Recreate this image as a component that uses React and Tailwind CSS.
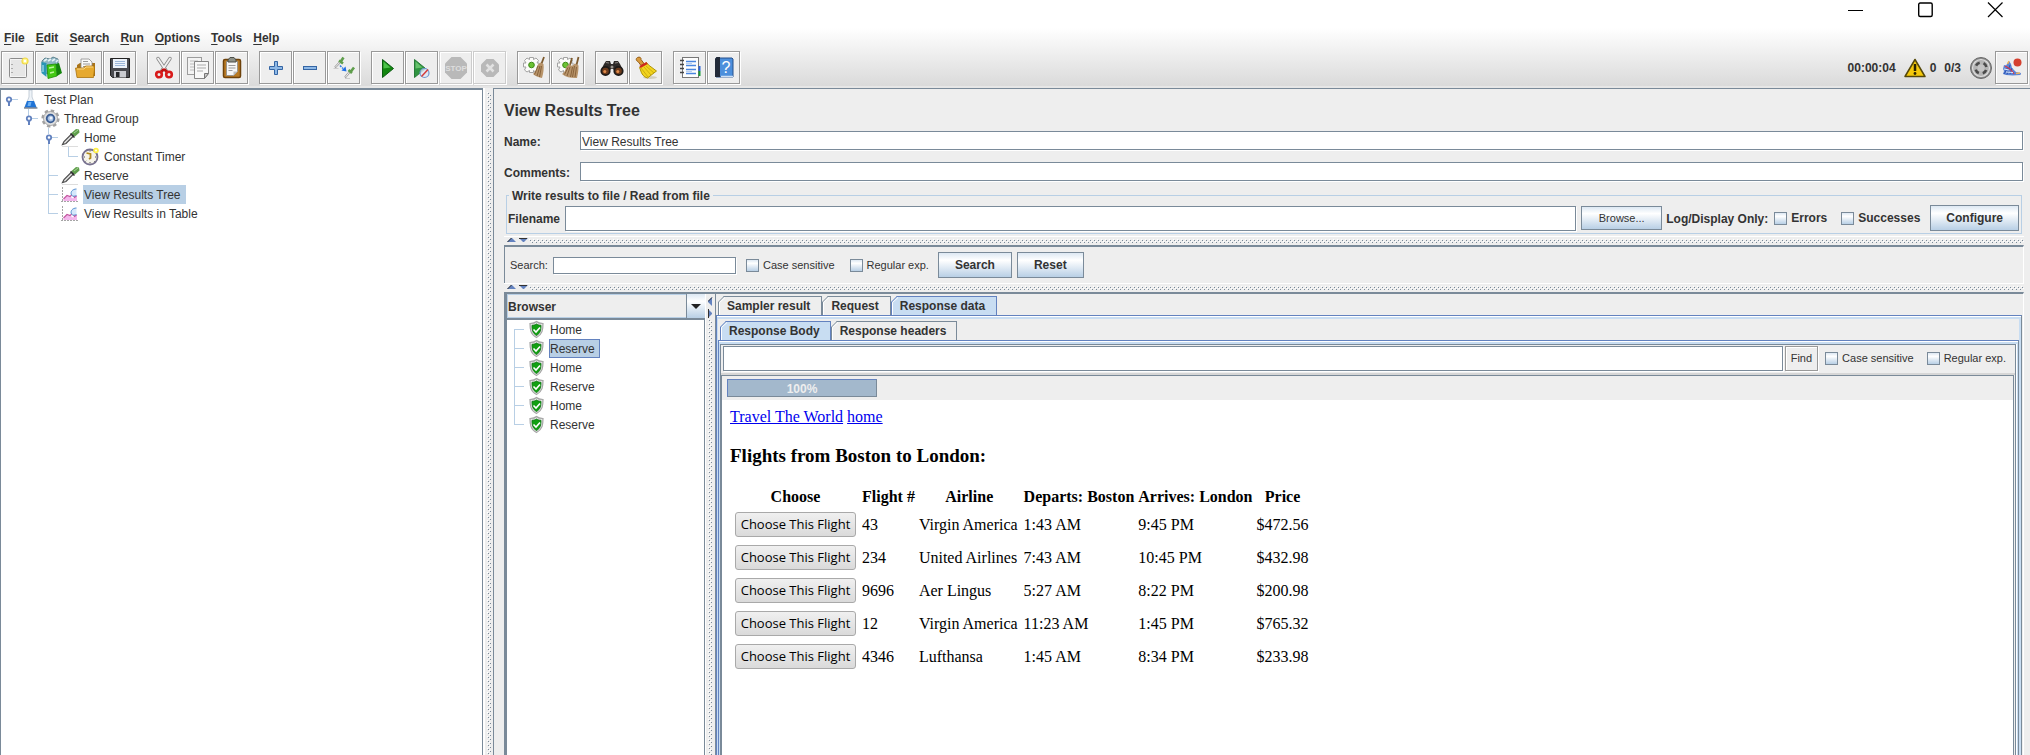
import { useState } from "react";

const menus = ["File", "Edit", "Search", "Run", "Options", "Tools", "Help"];

const flights = [
  { number: "43", airline: "Virgin America", departs: "1:43 AM", arrives: "9:45 PM", price: "$472.56" },
  { number: "234", airline: "United Airlines", departs: "7:43 AM", arrives: "10:45 PM", price: "$432.98" },
  { number: "9696", airline: "Aer Lingus", departs: "5:27 AM", arrives: "8:22 PM", price: "$200.98" },
  { number: "12", airline: "Virgin America", departs: "11:23 AM", arrives: "1:45 PM", price: "$765.32" },
  { number: "4346", airline: "Lufthansa", departs: "1:45 AM", arrives: "8:34 PM", price: "$233.98" },
];

/* ---------- Toolbar icons ---------- */

const NewIcon = () => (
  <svg width="24" height="24" viewBox="0 0 24 24">
    <rect x="3.5" y="2.5" width="17" height="19" rx="1" fill="#f4f4f4" stroke="#8c8c8c" />
    <rect x="5" y="4" width="14" height="16" fill="#e6e6e6" />
    <path d="M6 8v1M6 12v1M6 16v1" stroke="#999" strokeWidth="1.5" />
    <circle cx="19" cy="5" r="3" fill="#fff68a" stroke="#f0d94a" strokeWidth="1.2" />
    <circle cx="19" cy="5" r="1.2" fill="#fff" />
  </svg>
);

const TemplatesIcon = () => (
  <svg width="24" height="24" viewBox="0 0 24 24">
    <path d="M2 5l3-3 5 1 3-2 5 2v10l-8 6-8-4z" fill="#8fb6c4" stroke="#46707e" strokeWidth=".8" />
    <path d="M4 5l3-2M8 5l3-2M12 5l3-2M16 6l2-2" stroke="#e4f1f5" strokeWidth="1.6" />
    <path d="M1.500 6l5 1v14l-5-4z" fill="#2a96b5" />
    <path d="M3 9v7" stroke="#c3ecf7" />
    <path d="M7 9l9-1 1 12-9 2.500z" fill="#43c914" stroke="#1c8a06" strokeWidth=".8" />
    <path d="M16 8l3-1 3 10-5 3z" fill="#14850c" />
    <path d="M9 12l5-1M10 17l4-1" stroke="#baf79c" strokeWidth="1.400" />
  </svg>
);

const OpenIcon = () => (
  <svg width="24" height="24" viewBox="0 0 24 24">
    <path d="M3 9l3-2h15v13H3z" fill="#a9741a" />
    <path d="M7 3h8l3 3v10H7z" fill="#fafafa" stroke="#8d8d8d" strokeWidth=".8" />
    <path d="M9 5.500h5M9 8h7M9 10.500h7" stroke="#9a9a9a" />
    <path d="M1.500 12h8l2-2h9v3l-1 8.500H3z" fill="#e6a92f" stroke="#a8720f" strokeWidth=".8" />
    <path d="M3 13h7l2-2h7" stroke="#f8d789" fill="none" />
  </svg>
);

const SaveIcon = () => (
  <svg width="24" height="24" viewBox="0 0 24 24">
    <path d="M2.500 2.500h19v19h-17l-2-2z" fill="#4a4b50" stroke="#222" />
    <rect x="5" y="3" width="14" height="9" fill="#eef3fa" />
    <path d="M7 5.500h10M7 7.500h10M7 9.500h10" stroke="#9db7d8" />
    <rect x="6" y="15" width="12" height="6.500" fill="#c9cbd0" />
    <rect x="8" y="16" width="3.500" height="5" fill="#26272a" />
  </svg>
);

const CutIcon = () => (
  <svg width="24" height="24" viewBox="0 0 24 24" fill="none">
    <path d="M6 2.500l8 12M18 2.500L10 14.500" stroke="#888" strokeWidth="3.400" strokeLinecap="round" />
    <path d="M6 2.500l8 12M18 2.500L10 14.500" stroke="#f1f1f1" strokeWidth="1.800" strokeLinecap="round" />
    <path d="M12 13l-3 3M12 13l3 3" stroke="#c01010" strokeWidth="2.500" />
    <circle cx="7" cy="18.500" r="2.800" stroke="#d81a1a" strokeWidth="2.600" />
    <circle cx="17" cy="18.500" r="2.800" stroke="#d81a1a" strokeWidth="2.600" />
  </svg>
);

const CopyIcon = () => (
  <svg width="24" height="24" viewBox="0 0 24 24">
    <rect x="1.500" y="1.500" width="14" height="17" fill="#f3f3f3" stroke="#9c9c9c" />
    <path d="M4 5h8M4 8h4M4 11h4M4 14h4" stroke="#bbb" />
    <path d="M8.500 5.500h14v12l-4 5h-10z" fill="#f8f8f8" stroke="#858585" />
    <path d="M22.500 17.500h-4v5z" fill="#c9c9c9" stroke="#777" />
    <path d="M11 9h9M11 12h9M11 15h6" stroke="#aaa" />
  </svg>
);

const PasteIcon = () => (
  <svg width="24" height="24" viewBox="0 0 24 24">
    <rect x="3.500" y="3.500" width="17" height="18" rx="1.500" fill="#b87a24" stroke="#6e420b" strokeWidth="1.500" />
    <path d="M6.500 5.500h11v10l-4 4h-7z" fill="#f7f7f7" stroke="#8b8b8b" strokeWidth=".8" />
    <path d="M8.500 9.500h7M8.500 12h7M8.500 14.500h4" stroke="#9a9a9a" />
    <path d="M17.500 15.500h-4v4z" fill="#bcbcbc" />
    <path d="M8 6V4l2-2.500h4L16 4v2z" fill="#8c9088" stroke="#4c4f49" />
  </svg>
);

const PlusIcon = () => (
  <svg width="24" height="24" viewBox="0 0 24 24">
    <path d="M10.500 5.500h3v5h5v3h-5v5h-3v-5h-5v-3h5z" fill="#8db8e6" stroke="#3465a4" />
  </svg>
);

const MinusIcon = () => (
  <svg width="24" height="24" viewBox="0 0 24 24">
    <rect x="5.500" y="10.500" width="13" height="3" fill="#8db8e6" stroke="#3465a4" />
  </svg>
);

const ToggleIcon = () => (
  <svg width="24" height="24" viewBox="0 0 24 24" fill="none">
    <path d="M3 11.500L9 5" stroke="#9c9c9c" strokeWidth="2" />
    <path d="M3.500 11L8 6" stroke="#eee" />
    <path d="M7 4.500l4 3M8.500 6l3-4.500" stroke="#5f9e4c" strokeWidth="2.600" />
    <path d="M13 21.500l5-6" stroke="#9c9c9c" strokeWidth="2" />
    <path d="M13.500 21l4-5" stroke="#eee" />
    <path d="M16.500 14l3.500 3M18.500 16l3.500-4.500" stroke="#5f9e4c" strokeWidth="2.600" />
    <path d="M1.500 12.500h5M13 22.500h5" stroke="#ccc" />
    <path d="M8 9.500l3 3" stroke="#2f7be8" strokeWidth="1.500" strokeDasharray="2 1" />
    <path d="M14.500 15.500l-5-1 4-4z" fill="#1f6fe6" />
  </svg>
);

const StartIcon = () => (
  <svg width="24" height="24" viewBox="0 0 24 24">
    <path d="M6.500 3.500l11 9-11 9z" fill="#12860f" stroke="#0b5b12" />
    <path d="M7.500 5.500l7 6-7 1z" fill="#4cc24a" />
  </svg>
);

const StartNoPausesIcon = () => (
  <svg width="24" height="24" viewBox="0 0 24 24">
    <path d="M4.500 3.500l11 9-11 9z" fill="#2f9440" stroke="#287a38" />
    <path d="M5.500 5.500l7 6-7 1z" fill="#66c26c" />
    <circle cx="14.500" cy="17" r="4.500" fill="#dce6f5" fillOpacity=".8" stroke="#6e97cf" strokeWidth="1.200" />
    <path d="M11.500 20.500l6.500-7" stroke="#d43b3b" strokeWidth="1.500" />
  </svg>
);

const StopIcon = () => (
  <svg width="24" height="24" viewBox="0 0 24 24">
    <path d="M7.500 1h9L23 7.500v9L16.500 23h-9L1 16.500v-9z" fill="#b9b9b9" />
    <text x="12" y="15" textAnchor="middle" fontSize="8" fontWeight="bold" fill="#dedede" fontFamily="Liberation Sans, sans-serif">STOP</text>
  </svg>
);

const ShutdownIcon = () => (
  <svg width="24" height="24" viewBox="0 0 24 24">
    <path d="M8.500 3h7L21 8.500v7L15.500 21h-7L3 15.500v-7z" fill="#b9b9b9" />
    <path d="M8.500 8.500l7 7M15.500 8.500l-7 7" stroke="#e2e2e2" strokeWidth="2.500" />
  </svg>
);

const Gear = () => (
  <g>
    <path
      d="M7.500 1.500h4v2l2.500-1.500 2.500 2.500-1.500 2.500h2v4h-2l1 3-2.500 2-2-1.500v2h-4v-2L5 16l-2.500-2L4 11H1.500V7H4L2.500 4.500 5 2l2.500 1.500z"
      fill="#fbfbf9"
      stroke="#a3a3a3"
    />
    <circle cx="9.500" cy="9" r="2.800" fill="#6bc233" stroke="#3d8b16" />
  </g>
);

const ClearIcon = () => (
  <svg width="24" height="24" viewBox="0 0 24 24">
    <Gear />
    <path d="M19 9l3-8" stroke="#7d5a2e" strokeWidth="1.800" />
    <path d="M15.500 9l3-2.500 3 1.500c.500 4 0 9-1.500 14-3-.300-6-1.500-9-4 2-1.500 3.500-5 4.500-9z" fill="#b8946a" />
    <path d="M16 10l-3.500 8.500M18 10l-3 10M19.500 10l-2 11" stroke="#7c5730" strokeWidth=".8" />
  </svg>
);

const ClearAllIcon = () => (
  <svg width="24" height="24" viewBox="0 0 24 24">
    <Gear />
    <path d="M14 9l2-7M20.500 9l2-8" stroke="#7d5a2e" strokeWidth="1.800" />
    <path d="M10.500 10.500l3-2.500 2.500 2 3-2.500 3.500 2c0 5-.500 8-1.500 12.500-5 .300-11-.500-15-4 2.500-1.500 3.500-4 4.500-7.500z" fill="#b8946a" />
    <path d="M12 11.500l-3.500 7M14 11l-3 9M16.500 11l-2 10M18.500 10l-2 11M20.500 11l-1.500 10" stroke="#7c5730" strokeWidth=".8" />
  </svg>
);

const BinocularsIcon = () => (
  <svg width="24" height="24" viewBox="0 0 24 24">
    <path d="M4 8l2-3h4l1 3h2l1-3h4l2 3 3 6-6 4-4-5h-2l-4 5-6-4z" fill="#2e2a28" />
    <path d="M6 6.500l3 .5M18 6.500l-3 .5" stroke="#8b8580" strokeWidth="1.200" />
    <circle cx="5.500" cy="15" r="4.200" fill="#6d3b1c" stroke="#1d1a18" strokeWidth="1.800" />
    <circle cx="18.500" cy="15" r="4.200" fill="#6d3b1c" stroke="#1d1a18" strokeWidth="1.800" />
    <circle cx="4.800" cy="15.500" r="1.500" fill="#e08b4a" />
    <circle cx="17.800" cy="15.500" r="1.500" fill="#e08b4a" />
    <circle cx="12" cy="11" r="1.500" fill="#9a948e" />
  </svg>
);

const BroomIcon = () => (
  <svg width="24" height="24" viewBox="0 0 24 24">
    <ellipse cx="16" cy="21.500" rx="7" ry="1.500" fill="#d3cfc0" />
    <path d="M3.500 1.500c2-1 4 0 3.500 2l3 4-3 2-3-4c-2-.5-2.500-3-.5-4z" fill="#d99a3c" stroke="#97601a" />
    <path d="M5.500 11.500l7-5 2 2.500 8 6-9 7c-4-1-6-4-7-8z" fill="#f2d41e" stroke="#b0950a" />
    <path d="M7 12l7 9M10 11l7 8M12 10l8 7" stroke="#c3a50c" strokeWidth=".8" />
    <path d="M6 11l7-4" stroke="#cf2a1e" strokeWidth="2.500" />
  </svg>
);

const FunctionHelperIcon = () => (
  <svg width="24" height="24" viewBox="0 0 24 24">
    <rect x="4.500" y="1.500" width="16" height="20" fill="#fdfdfd" stroke="#777" />
    <path d="M8 5.500h10M8 9.500h10M8 13.500h10M8 17.500h10" stroke="#4a86e0" strokeWidth="1.500" />
    <path d="M8 7.500h6M8 15.500h6" stroke="#b5cdf0" />
    <path d="M2 4.500h4M2 8.500h4M2 12.500h4M2 16.500h4" stroke="#444" strokeWidth="1.500" />
    <path d="M21.500 10v5" stroke="#2e66d8" strokeWidth="2" />
    <path d="M21.500 15v5" stroke="#199a3b" strokeWidth="2" />
  </svg>
);

const HelpIcon = () => (
  <svg width="24" height="24" viewBox="0 0 24 24">
    <path d="M4 2h16l1 1v18H4z" fill="#4c8fdc" stroke="#27518c" />
    <path d="M3 3l1.500-2H8v20H3z" fill="#222a38" />
    <path d="M9 20.500h12" stroke="#cfe0f4" strokeWidth="1.500" />
    <text x="14" y="17" textAnchor="middle" fontSize="16" fill="#fff" fontFamily="Liberation Sans, sans-serif">?</text>
  </svg>
);

const WarningIcon = () => (
  <svg width="22" height="20" viewBox="0 0 22 20">
    <path d="M11 1.500L21 18.500H1z" fill="#f5c90b" stroke="#55480a" strokeWidth="1.500" strokeLinejoin="round" />
    <path d="M11 6v7" stroke="#2c2500" strokeWidth="2.500" />
    <circle cx="11" cy="15.500" r="1.400" fill="#2c2500" />
  </svg>
);

const RemoteIcon = () => (
  <svg width="24" height="24" viewBox="0 0 24 24" fill="none">
    <circle cx="12" cy="12" r="10.500" fill="#8d8d8d" stroke="#6a6a6a" />
    <circle cx="12" cy="12" r="8.500" fill="#b4b4b4" stroke="#dedede" strokeWidth="1.200" />
    <circle cx="12" cy="12" r="5.500" stroke="#4a4a4a" strokeWidth="2.600" strokeDasharray="4.600 4.040" strokeDashoffset="-2" />
    <circle cx="12" cy="12" r="3.500" fill="#c4c4c4" />
  </svg>
);

const FeatherIcon = () => (
  <svg width="24" height="24" viewBox="0 0 24 24">
    <path d="M4 9l2 .500L9 5l2 3 1 4 4 4 5 1-.500 2-8 .500L6 19l-3-1 1-3-1-2z" fill="#5c84d6" />
    <path d="M4 18l4-7M7 18.500L10 9M10 18l2-6" stroke="#2c54b0" />
    <path d="M5 10c4 2 7 4 9 8" stroke="#d63a4a" strokeWidth="1.200" fill="none" />
    <path d="M9 5l-1.500 3M20 17l-4 .5" stroke="#f0b45a" strokeWidth="1.500" />
    <path d="M4 13l5 1M6 16l7 .5" stroke="#dfe9fb" />
    <circle cx="17.500" cy="6.500" r="4" fill="#d5402f" />
  </svg>
);

const toolGroups = [
  [["New", NewIcon], ["Templates", TemplatesIcon], ["Open", OpenIcon], ["Save", SaveIcon]],
  [["Cut", CutIcon], ["Copy", CopyIcon], ["Paste", PasteIcon]],
  [["Expand All", PlusIcon], ["Collapse All", MinusIcon], ["Toggle", ToggleIcon]],
  [["Start", StartIcon], ["Start no pauses", StartNoPausesIcon], ["Stop", StopIcon, true], ["Shutdown", ShutdownIcon, true]],
  [["Clear", ClearIcon], ["Clear All", ClearAllIcon]],
  [["Search", BinocularsIcon], ["Reset Search", BroomIcon]],
  [["Function Helper", FunctionHelperIcon], ["Help", HelpIcon]],
];

/* ---------- Tree icons, all in a 20x19 box ---------- */

const FlaskIcon = () => (
  <svg width="20" height="19" viewBox="0 0 20 19">
    <path d="M8 0h3M8 0v7L3.500 18h12L11 7V0" fill="#eef3f8" stroke="#b9c4cf" strokeWidth=".8" />
    <path d="M6 11h7l2.500 6.500h-12z" fill="#1f73d6" />
    <path d="M7.500 12h3l-1 4h-3z" fill="#6cb0f2" />
    <path d="M3 18h13.500" stroke="#56616e" />
  </svg>
);

const GearIcon = () => (
  <svg width="20" height="19" viewBox="0 0 20 19">
    <circle cx="9.500" cy="9.500" r="7.800" fill="none" stroke="#a2a2a2" strokeWidth="2.600" strokeDasharray="3.400 2.720" />
    <circle cx="9.500" cy="9.500" r="7" fill="#dedede" stroke="#999" strokeWidth=".8" />
    <circle cx="9.500" cy="9.500" r="3.800" fill="#a9c1e2" stroke="#3b5e94" strokeWidth="1.800" />
    <circle cx="10" cy="9" r="1.500" fill="#eef4fb" />
  </svg>
);

const DropperIcon = () => (
  <svg width="20" height="19" viewBox="0 0 20 19">
    <path d="M1 18.500h16" stroke="#ddd" />
    <path d="M1.500 16.500l1.500-3 8-8 2 2-8 8z" fill="#e2e2e2" stroke="#4c4c4c" strokeWidth="1.200" />
    <path d="M9.500 5.500l4 4" stroke="#2f2f2f" strokeWidth="1.600" />
    <path d="M10.500 5l4.500-4 3 .5.500 3L14 8.500z" fill="#5f9e4c" />
    <path d="M13 5l4-3" stroke="#a6d394" />
  </svg>
);

const TimerIcon = () => (
  <svg width="20" height="19" viewBox="0 0 20 19">
    <circle cx="9" cy="10" r="7.500" fill="#f6f4ea" stroke="#77718f" strokeWidth="1.800" />
    <path d="M5.500 6l4 1v4l-1.500 1" stroke="#b08a1e" strokeWidth="1.800" fill="none" />
    <path d="M9 3.500v1M9 15v1M3 10h1M14 10h1M13 14l.7.700M4.500 14.500l.7-.7" stroke="#555" />
    <circle cx="15" cy="3.500" r="2.800" fill="#fff04a" />
    <circle cx="15" cy="3.500" r="1" fill="#fff" />
  </svg>
);

const ChartIcon = () => (
  <svg width="20" height="19" viewBox="0 0 20 19">
    <path d="M1.500 2v15M0 16.500h17" stroke="#a5a5a5" strokeDasharray="2 1" />
    <path d="M2.500 14.500l3.500-3.500 3 .500 3 2 4-3v5.500H2.500z" fill="#f3b6ec" />
    <path d="M2.500 14l3.500-3.500 3 1 2.500-2 2 3 2-1.500" stroke="#c4549f" strokeWidth="1.200" fill="none" />
    <path d="M15.500 4c-4 0-6.500 3-5 6 1 1.500 3 1.500 5 .500" fill="#d6e8fb" stroke="#5a92d2" />
  </svg>
);

const ShieldIcon = () => (
  <svg width="20" height="19" viewBox="0 0 20 19">
    <path d="M9.500 1.500C11 3 13.500 3.500 16 3.500c0 6-.5 11-6.500 14C3.500 14.500 3 9.500 3 3.500c2.500 0 5-.5 6.500-2z" fill="#e6e6e6" stroke="#a5a5a5" strokeWidth="1.200" />
    <path d="M9.500 4C11 5 12.500 5.300 14 5.300c0 4.500-.5 8-4.500 10.200C5.500 13.300 5 9.800 5 5.300 6.500 5.300 8 5 9.500 4z" fill="#12a012" stroke="#0a7010" strokeWidth=".8" />
    <path d="M6.500 9.500l2.500 2.500 4-4.500" stroke="#fff" strokeWidth="1.600" fill="none" />
  </svg>
);

/* One 20px step of indentation: the connector lines and the expand handle */
const Guide = ({ kind }) => (
  <svg width="20" height="19" viewBox="0 0 20 19" className="shrink-0" shapeRendering="crispEdges">
    {(kind === "pipe" || kind === "tee") && <path d="M7.500 0v19" stroke="#b8cfe5" />}
    {(kind === "elbow" || kind === "knob") && <path d="M7.500 0v10" stroke="#b8cfe5" />}
    {(kind === "first" || kind === "knobDown") && <path d="M7.500 9v10" stroke="#b8cfe5" />}
    {kind === "knobDown" && <path d="M7.500 0v6" stroke="#b8cfe5" />}
    {kind !== "blank" && kind !== "pipe" && <path d="M7 9.500h10" stroke="#b8cfe5" />}
    {(kind === "root" || kind === "knob" || kind === "knobDown") && (
      <g shapeRendering="auto">
        <path d="M8 11v5" stroke="#6382bf" strokeWidth="2" />
        <circle cx="8" cy="9.500" r="2.200" fill="#fff" stroke="#6382bf" strokeWidth="1.800" />
      </g>
    )}
  </svg>
);

const TreeRow = ({ guides, icon: Icon, label, selected, framed, onClick }) => {
  let tone = "border-transparent";
  if (selected) tone = framed ? "border-[#6382bf] bg-[#b8cfe5]" : "border-[#b8cfe5] bg-[#b8cfe5]";
  return (
    <li className="flex h-[19px] items-center">
      {guides.map((kind, i) => (
        <Guide key={i} kind={kind} />
      ))}
      <Icon />
      <button
        onClick={onClick}
        className={`ml-[2px] h-[19px] border pt-[2px] pr-1 leading-[15px] whitespace-nowrap ${tone}`}
      >
        {label}
      </button>
    </li>
  );
};

const planRows = [
  { guides: ["root"], icon: FlaskIcon, label: "Test Plan" },
  { guides: ["blank", "knob"], icon: GearIcon, label: "Thread Group" },
  { guides: ["blank", "blank", "knobDown"], icon: DropperIcon, label: "Home" },
  { guides: ["blank", "blank", "pipe", "elbow"], icon: TimerIcon, label: "Constant Timer" },
  { guides: ["blank", "blank", "tee"], icon: DropperIcon, label: "Reserve" },
  { guides: ["blank", "blank", "tee"], icon: ChartIcon, label: "View Results Tree" },
  { guides: ["blank", "blank", "elbow"], icon: ChartIcon, label: "View Results in Table" },
];

const samples = ["Home", "Reserve", "Home", "Reserve", "Home", "Reserve"];

/* ---------- Metal look and feel widgets ---------- */

const Bumps = ({ id, className }) => (
  <svg className={className} shapeRendering="crispEdges">
    <defs>
      <pattern id={id} width="4" height="4" patternUnits="userSpaceOnUse">
        <rect width="1" height="1" fill="#fff" />
        <rect x="1" y="1" width="1" height="1" fill="#7a8a99" />
        <rect x="2" y="2" width="1" height="1" fill="#fff" />
        <rect x="3" y="3" width="1" height="1" fill="#7a8a99" />
      </pattern>
    </defs>
    <rect width="100%" height="100%" fill={`url(#${id})`} />
  </svg>
);

const HorizontalDivider = ({ id }) => (
  <div className="flex h-[9px] items-start border-t border-white pt-px pl-[3px]">
    <svg width="22" height="5" viewBox="0 0 22 5" className="shrink-0">
      <path d="M0 4l4-4h1l4 4z" fill="#6382bf" />
      <path d="M.5 4l4-4" stroke="#333" fill="none" />
      <path d="M12 0h9l-4 4h-1z" fill="#6382bf" />
      <path d="M12 .5h8" stroke="#333" />
    </svg>
    <Bumps id={id} className="mt-px h-1 w-0 flex-1" />
  </div>
);

const MetalButton = ({ children, className }) => (
  <button
    className={`shrink-0 border border-[#7a8a99] bg-linear-to-b from-[#dde8f3] via-white via-30% to-[#b8cfe5] whitespace-nowrap ${className}`}
  >
    {children}
  </button>
);

const Check = ({ label, className }) => (
  <label className={`flex shrink-0 items-center gap-1 whitespace-nowrap ${className}`}>
    <input
      type="checkbox"
      className="size-[13px] appearance-none border border-[#7a8a99] bg-linear-to-b from-[#dde8f3] via-white via-30% to-[#b8cfe5] checked:bg-[#6382bf]"
    />
    {label}
  </label>
);

const Tab = ({ label, selected, onClick, className }) => (
  <button
    role="tab"
    aria-selected={selected}
    onClick={onClick}
    className={`relative h-full border-t border-r pl-[9px] font-bold whitespace-nowrap ${className} ${
      selected ? "border-[#6382bf] bg-[#c8ddf2]" : "border-[#7a8a99] bg-[#eee]"
    }`}
  >
    <svg width="7" height="19" viewBox="0 0 7 19" className="absolute -top-px left-0">
      <path d="M0 0h6L0 6z" fill="#eee" />
      <path d="M.5 19V6L6.500 0" stroke={selected ? "#6382bf" : "#7a8a99"} fill="none" />
      <path d="M1.500 19V6.500L7 1.500" stroke="#fff" fill="none" />
    </svg>
    {label}
  </button>
);

const fieldStyle = "min-w-0 border border-[#7a8a99] bg-white shadow-[1px_1px_0_white] outline-none";

const TitleBar = () => (
  <div className="flex h-7 items-start justify-end bg-white">
    <button aria-label="Minimize" className="flex h-[19px] w-[70px] items-center justify-center">
      <svg width="16" height="16" viewBox="0 0 16 16">
        <path d="M1 8.500h15" stroke="#000" />
      </svg>
    </button>
    <button aria-label="Maximize" className="flex h-[19px] w-[70px] items-center justify-center">
      <svg width="16" height="16" viewBox="0 0 16 16">
        <rect x="1.700" y="1" width="13.500" height="13.500" rx="1.500" fill="none" stroke="#000" strokeWidth="1.400" />
      </svg>
    </button>
    <button aria-label="Close" className="flex h-[19px] w-[70px] items-center justify-center">
      <svg width="16" height="16" viewBox="0 0 16 16">
        <path d="M1 .500l14.500 14.500M15.500.500L1 15" stroke="#000" strokeWidth="1.200" />
      </svg>
    </button>
  </div>
);

const Header = () => (
  <header className="border-b-2 border-[#e6e6e6] bg-linear-to-b from-white to-[#dadada]">
    <nav className="flex h-[22px] gap-[11px] pl-[4px] leading-5 font-bold">
      {menus.map((menu) => (
        <button key={menu} className="pb-[2px]">
          <span className="underline underline-offset-2">{menu[0]}</span>
          {menu.slice(1)}
        </button>
      ))}
    </nav>
    <div className="flex h-9 items-start pt-px pl-px">
      <div className="flex gap-[11px]">
        {toolGroups.map((group, i) => (
          <div key={i} className="flex gap-px">
            {group.map(([name, Icon, disabled]) => (
              <button
                key={name}
                aria-label={name}
                disabled={disabled}
                className="flex size-[33px] items-center justify-center border border-[#999] bg-[#eee] shadow-[1px_1px_0_white,inset_1px_1px_0_white] disabled:border-[#ccc]"
              >
                <Icon />
              </button>
            ))}
          </div>
        ))}
      </div>
      <div className="ml-auto flex items-center pr-[2px] font-bold">
        <span>00:00:04</span>
        <span className="ml-2">
          <WarningIcon />
        </span>
        <span className="ml-1">0</span>
        <span className="ml-2">0/3</span>
        <span className="ml-2">
          <RemoteIcon />
        </span>
        <button
          aria-label="Apache JMeter"
          className="ml-[2px] flex size-[33px] items-center justify-center border border-[#999] bg-[#eee] shadow-[1px_1px_0_white,inset_1px_1px_0_white]"
        >
          <FeatherIcon />
        </button>
      </div>
    </div>
  </header>
);

const FlightsPage = () => (
  <div className="flex-1 bg-white pt-2 pl-2 font-['Liberation_Serif',serif] text-base leading-[18px] text-black">
    <p>
      <a href="#travel" className="text-[#0000ee] underline">Travel The World</a>{" "}
      <a href="#home" className="text-[#0000ee] underline">home</a>
    </p>
    <h3 className="mt-[19px] text-[19px] leading-[22px] font-bold">Flights from Boston to London:</h3>
    <table className="mt-[18px] border-separate border-spacing-[2px]">
      <thead>
        <tr>
          {["Choose", "Flight #", "Airline", "Departs: Boston", "Arrives: London", "Price"].map((head) => (
            <th key={head} className="p-px text-center font-bold whitespace-nowrap">{head}</th>
          ))}
        </tr>
      </thead>
      <tbody>
        {flights.map((flight) => (
          <tr key={flight.number}>
            <td className="p-px">
              <button className="m-[2px] block h-[25px] w-[121px] rounded-[3px] border border-[#a9a9a9] bg-linear-to-b from-[#f0f0f0] to-[#dadada] font-['Open_Sans',sans-serif] text-[13px] leading-[21px] whitespace-nowrap">
                Choose This Flight
              </button>
            </td>
            <td className="p-px">{flight.number}</td>
            <td className="py-px pr-[3px] pl-px whitespace-nowrap">{flight.airline}</td>
            <td className="p-px">{flight.departs}</td>
            <td className="p-px">{flight.arrives}</td>
            <td className="p-px">{flight.price}</td>
          </tr>
        ))}
      </tbody>
    </table>
  </div>
);

const ResponsePane = () => {
  const [tab, setTab] = useState("Response data");
  const [bodyTab, setBodyTab] = useState("Response Body");

  return (
    <section className="mr-px flex min-w-0 flex-1 flex-col border-l border-[#7a8a99]">
      <div role="tablist" className="flex h-[21px] pt-[2px] pl-[2px]">
        {["Sampler result", "Request", "Response data"].map((name) => (
          <Tab key={name} label={name} selected={tab === name} onClick={() => setTab(name)} className="pr-[11px]" />
        ))}
      </div>
      <div className="flex flex-1 flex-col border-t border-r border-l border-t-[#6382bf] border-r-[#7a8a99] border-l-[#6382bf]">
        <div className="flex flex-1 flex-col border-t border-white bg-[#c8ddf2] pt-[2px] pr-[2px] pl-px">
          <div role="tablist" className="flex h-[21px] bg-[#eee] pt-[2px] pl-[2px]">
            {["Response Body", "Response headers"].map((name) => (
              <Tab key={name} label={name} selected={bodyTab === name} onClick={() => setBodyTab(name)} className="pr-[10px]" />
            ))}
          </div>
          <div className="flex flex-1 flex-col border-t border-r border-l border-t-[#6382bf] border-r-[#7a8a99] border-l-[#6382bf]">
            <div className="flex flex-1 flex-col border-t border-white pt-[2px] pr-[2px] pl-px">
              {/* Find bar */}
              <div className="flex flex-1 flex-col border border-b-0 border-[#7a8a99] bg-[#eee] shadow-[1px_0_0_white]">
                <div className="flex items-center border-b-2 border-[#d6d6d6] pt-px pr-[9px] pb-[2px] pl-[2px] text-[11px]">
                  <input type="text" aria-label="Find text" className={`h-[25px] flex-1 ${fieldStyle}`} />
                  <button className="ml-[2px] h-[25px] border border-[#999] px-[5px] shadow-[1px_1px_0_white,inset_1px_1px_0_white]">
                    Find
                  </button>
                  <Check label="Case sensitive" className="ml-[7px]" />
                  <Check label="Regular exp." className="ml-[13px]" />
                </div>
                <div className="mr-px flex flex-1 flex-col border-t border-r border-l border-[#7a8a99]">
                  <div className="h-6 pt-[3px] pl-[5px]">
                    <div
                      role="progressbar"
                      aria-valuenow={100}
                      className="h-[18px] w-[150px] border border-t-[#6382bf] border-r-[#7a8a99] border-b-[#7a8a99] border-l-[#6382bf] bg-[#a3b8cc] text-center leading-[18px] font-bold text-[#eee]"
                    >
                      100%
                    </div>
                  </div>
                  <FlightsPage />
                </div>
              </div>
            </div>
          </div>
        </div>
      </div>
    </section>
  );
};

export default function App() {
  const [node, setNode] = useState(5);
  const [sample, setSample] = useState(1);

  return (
    <div className="flex min-h-screen flex-col bg-[#eee] font-['Liberation_Sans',Arial,sans-serif] text-xs text-[#333]">
      <TitleBar />
      <Header />
      <main className="flex flex-1">
        {/* Test plan tree */}
        <aside className="w-[483px] shrink-0 border-t-2 border-r border-l border-[#7a8a99] bg-white">
          <ul>
            {planRows.map((row, i) => (
              <TreeRow key={row.label} {...row} selected={node === i} onClick={() => setNode(i)} />
            ))}
          </ul>
        </aside>
        <div className="flex w-[10px] shrink-0 border-l-2 border-white pt-1 pl-[2px]">
          <Bumps id="bumps-main" className="h-full w-1" />
        </div>

        <div className="flex min-w-0 flex-1 flex-col border-t border-l border-[#7a8a99] pr-[6px] pl-[10px]">
          <h1 className="mt-[10px] text-base leading-6 font-bold">View Results Tree</h1>
          <div className="mt-2 flex h-[19px] items-center pr-px">
            <label htmlFor="name" className="w-[76px] shrink-0 pt-[2px] font-bold">Name:</label>
            <input id="name" type="text" defaultValue="View Results Tree" className={`h-[19px] flex-1 pt-[2px] pl-px ${fieldStyle}`} />
          </div>
          <div className="mt-3 flex h-[19px] items-center pr-px">
            <label htmlFor="comments" className="w-[76px] shrink-0 pt-[2px] font-bold">Comments:</label>
            <input id="comments" type="text" className={`h-[19px] flex-1 pt-[2px] pl-px ${fieldStyle}`} />
          </div>

          <fieldset className="mt-[7px] mr-[2px] mb-[2px] ml-[2px] min-w-0 border border-[#b8cfe5] pb-[2px]">
            <legend className="ml-[2px] px-[3px] pt-[2px] leading-3 font-bold">Write results to file / Read from file</legend>
            <div className="flex items-center pt-[3px] pr-[2px] pl-px font-bold">
              <label htmlFor="filename" className="w-[57px] shrink-0 pt-[2px]">Filename</label>
              <input id="filename" type="text" className={`h-[25px] flex-1 ${fieldStyle}`} />
              <MetalButton className="ml-[5px] h-6 w-[81px] text-[11px] font-normal">Browse...</MetalButton>
              <span className="ml-1 shrink-0 pt-[2px]">Log/Display Only:</span>
              <Check label="Errors" className="ml-[6px]" />
              <Check label="Successes" className="ml-[14px]" />
              <MetalButton className="ml-[10px] h-[26px] px-[15px] font-bold">Configure</MetalButton>
            </div>
          </fieldset>

          <HorizontalDivider id="bumps-file" />

          {/* Search bar */}
          <div className="flex items-center border-t-2 border-r border-l border-t-[#7a8a99] border-r-white border-l-[#7a8a99] py-[5px] pl-[5px] text-[11px]">
            <label htmlFor="search" className="w-[43px]">Search:</label>
            <input id="search" type="text" className={`h-[17px] w-[183px] ${fieldStyle}`} />
            <Check label="Case sensitive" className="ml-[10px]" />
            <Check label="Regular exp." className="ml-[15px]" />
            <MetalButton className="ml-[9px] h-[26px] px-4 text-xs font-bold">Search</MetalButton>
            <MetalButton className="ml-[5px] h-[26px] px-4 text-xs font-bold">Reset</MetalButton>
          </div>

          <HorizontalDivider id="bumps-search" />

          <div className="flex flex-1 border-t-2 border-r border-t-[#7a8a99] border-r-white">
            <div className="flex w-[201px] shrink-0 flex-col border-l-[3px] border-[#7a8a99]">
              <div className="relative border-b-2 border-[#7a8a99]">
                <select
                  aria-label="Renderer"
                  className="block h-6 w-full appearance-none border border-[#b8cfe5] bg-[#eee] pt-px font-bold outline-none"
                >
                  <option>Browser</option>
                </select>
                <span className="pointer-events-none absolute inset-y-0 right-0 flex w-[19px] items-center justify-center border-l border-[#7a8a99] bg-linear-to-b from-[#dde8f3] via-white via-30% to-[#b8cfe5]">
                  <svg width="10" height="5" viewBox="0 0 10 5">
                    <path d="M0 0h10L5 5z" fill="#222" />
                  </svg>
                </span>
              </div>
              <ul className="flex-1 border-r border-[#7a8a99] bg-white">
                {samples.map((name, i) => (
                  <TreeRow
                    key={i}
                    guides={[i === 0 ? "first" : i === samples.length - 1 ? "elbow" : "tee"]}
                    icon={ShieldIcon}
                    label={name}
                    framed
                    selected={sample === i}
                    onClick={() => setSample(i)}
                  />
                ))}
              </ul>
            </div>
            <div className="flex w-[10px] shrink-0 flex-col border-l border-white pt-[3px] pl-[2px]">
              <svg width="5" height="22" viewBox="0 0 5 22" className="shrink-0">
                <path d="M4 0v9L0 5V4z" fill="#6382bf" />
                <path d="M4 .5L0 4.500" stroke="#333" />
                <path d="M0 12v9l4-4v-1z" fill="#6382bf" />
                <path d="M.5 12v9" stroke="#333" />
              </svg>
              <Bumps id="bumps-results" className="h-0 w-1 flex-1" />
            </div>
            <ResponsePane />
          </div>
        </div>
      </main>
    </div>
  );
}
